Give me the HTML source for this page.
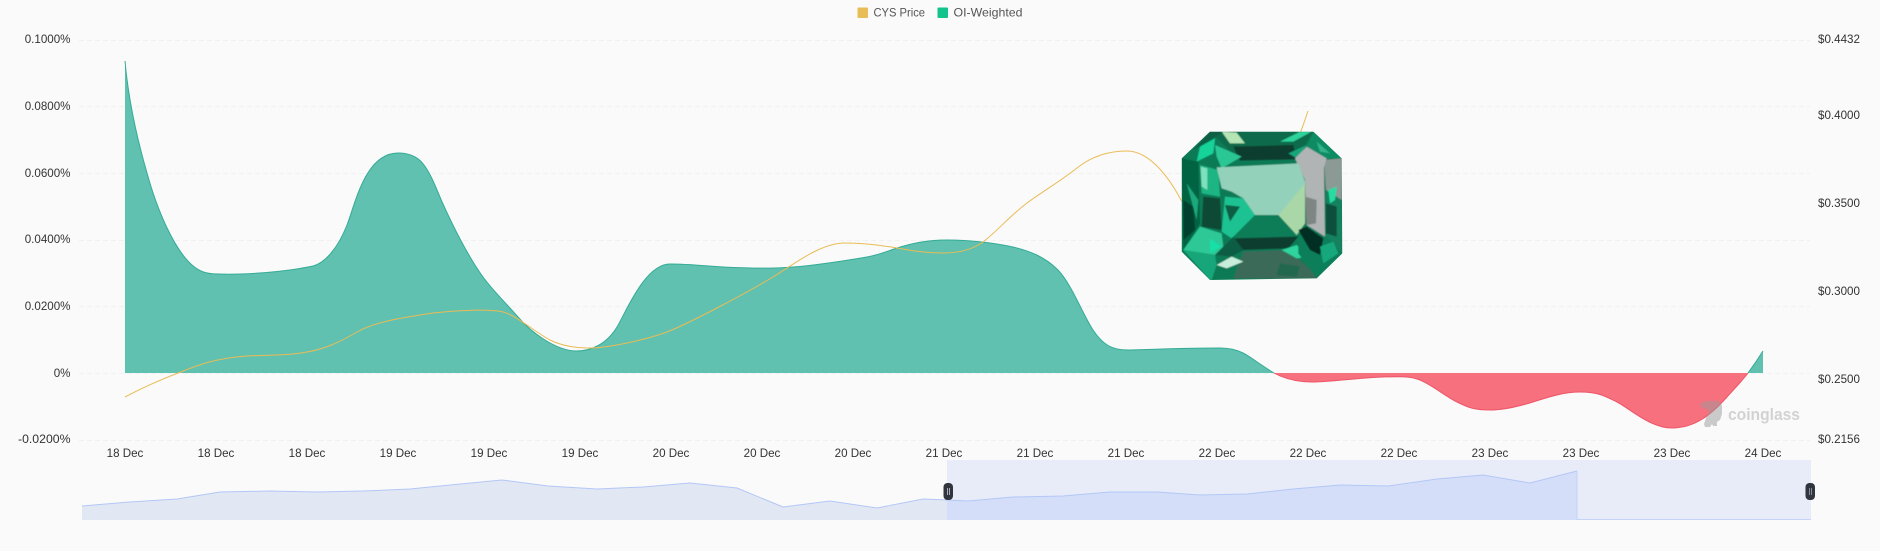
<!DOCTYPE html>
<html>
<head>
<meta charset="utf-8">
<style>
html,body{margin:0;padding:0;background:#fafafa;width:1880px;height:551px;overflow:hidden}
svg{display:block}
text{font-family:"Liberation Sans",sans-serif;font-size:11.6px;fill:#333}
</style>
</head>
<body>
<svg width="1880" height="551" viewBox="0 0 1880 551" xmlns="http://www.w3.org/2000/svg">
<defs>
<filter id="soft" x="-5%" y="-5%" width="110%" height="110%"><feGaussianBlur stdDeviation="1.6"/></filter>
<clipPath id="oct"><polygon points="180,125 490,125 575,205 577,490 500,565 180,570 95,485 95,205"/></clipPath>
</defs>
<rect width="1880" height="551" fill="#fafafa"/>

<!-- legend -->
<rect x="857.5" y="7.5" width="10.5" height="10.5" rx="1" fill="#e8bc57"/>
<text x="873.5" y="16.5" textLength="51.5" lengthAdjust="spacingAndGlyphs" style="fill:#555;font-size:11.6px">CYS Price</text>
<rect x="937.5" y="7.5" width="10.5" height="10.5" rx="1" fill="#12c48c"/>
<text x="953.5" y="16.5" textLength="69" lengthAdjust="spacingAndGlyphs" style="fill:#555;font-size:11.6px">OI-Weighted</text>

<!-- grid -->
<g stroke="#f1f1f1" stroke-width="1" stroke-dasharray="5 3">
<line x1="79" x2="1810" y1="40.5" y2="40.5"/>
<line x1="79" x2="1810" y1="106.5" y2="106.5"/>
<line x1="79" x2="1810" y1="173.5" y2="173.5"/>
<line x1="79" x2="1810" y1="240.5" y2="240.5"/>
<line x1="79" x2="1810" y1="306.5" y2="306.5"/>
<line x1="79" x2="1810" y1="373.5" y2="373.5"/>
<line x1="79" x2="1810" y1="440.5" y2="440.5"/>
</g>

<!-- left axis -->
<g text-anchor="end">
<text x="70.5" y="43">0.1000%</text>
<text x="70.5" y="110">0.0800%</text>
<text x="70.5" y="177">0.0600%</text>
<text x="70.5" y="243">0.0400%</text>
<text x="70.5" y="310">0.0200%</text>
<text x="70.5" y="377">0%</text>
<text x="70.5" y="443" textLength="52.500" lengthAdjust="spacingAndGlyphs">-0.0200%</text>
</g>

<!-- right axis -->
<g>
<text x="1818" y="43">$0.4432</text>
<text x="1818" y="119">$0.4000</text>
<text x="1818" y="207">$0.3500</text>
<text x="1818" y="295">$0.3000</text>
<text x="1818" y="383">$0.2500</text>
<text x="1818" y="443">$0.2156</text>
</g>

<!-- x axis -->
<g text-anchor="middle">
<text x="125" y="457">18 Dec</text>
<text x="216" y="457">18 Dec</text>
<text x="307" y="457">18 Dec</text>
<text x="398" y="457">19 Dec</text>
<text x="489" y="457">19 Dec</text>
<text x="580" y="457">19 Dec</text>
<text x="671" y="457">20 Dec</text>
<text x="762" y="457">20 Dec</text>
<text x="853" y="457">20 Dec</text>
<text x="944" y="457">21 Dec</text>
<text x="1035" y="457">21 Dec</text>
<text x="1126" y="457">21 Dec</text>
<text x="1217" y="457">22 Dec</text>
<text x="1308" y="457">22 Dec</text>
<text x="1399" y="457">22 Dec</text>
<text x="1490" y="457">23 Dec</text>
<text x="1581" y="457">23 Dec</text>
<text x="1672" y="457">23 Dec</text>
<text x="1763" y="457">24 Dec</text>
</g>

<!-- green area -->
<path fill="#60c1b0" d="M125 61 C128 95 136 135 147 173 C158 213 175 250 192 265 C199 271 205 274 218 274 C245 275 285 272 313 266 C325 263 338 248 347 225 C355 205 365 153 398 153 C418 153 426 163 437 190 C446 212 465 252 483 277 C494 292 507 304 518 317 C530 331 555 351 577 351 C590 351 606 345 617 327 C626 312 645 264 670 264 C690 264 705 266 723 267 C745 268 770 269 793 267 C820 265 855 259 867 257 C878 255 885 252 897 248 C910 244 925 240 947 240 C970 240 995 243 1013 247 C1030 251 1045 257 1058 270 C1072 285 1082 313 1093 330 C1103 345 1112 350 1128 350 C1146 350 1170 348 1220 348 C1230 348 1237 350 1243 353 C1251 357 1259 364 1274 373 L125 373 Z"/>
<path fill="none" stroke="#34ab95" stroke-width="1" d="M125 61 C128 95 136 135 147 173 C158 213 175 250 192 265 C199 271 205 274 218 274 C245 275 285 272 313 266 C325 263 338 248 347 225 C355 205 365 153 398 153 C418 153 426 163 437 190 C446 212 465 252 483 277 C494 292 507 304 518 317 C530 331 555 351 577 351 C590 351 606 345 617 327 C626 312 645 264 670 264 C690 264 705 266 723 267 C745 268 770 269 793 267 C820 265 855 259 867 257 C878 255 885 252 897 248 C910 244 925 240 947 240 C970 240 995 243 1013 247 C1030 251 1045 257 1058 270 C1072 285 1082 313 1093 330 C1103 345 1112 350 1128 350 C1146 350 1170 348 1220 348 C1230 348 1237 350 1243 353 C1251 357 1259 364 1274 373"/>

<!-- red area -->
<path fill="#f6707d" d="M1274 373 C1283 378 1295 382 1313 382 C1330 382 1355 378 1383 377 C1400 376.500 1410 376 1420 380 C1432 385 1445 396 1457 402 C1469 408 1475 410 1490 410 C1505 410 1520 406 1533 402 C1546 398 1562 392 1580 392 C1598 392 1605 396 1617 402 C1629 408 1650 428 1672 428 C1694 428 1710 416 1727 397 C1736 387 1742 381 1748 373 Z"/>
<path fill="none" stroke="#ee5568" stroke-width="1" d="M1274 373 C1283 378 1295 382 1313 382 C1330 382 1355 378 1383 377 C1400 376.500 1410 376 1420 380 C1432 385 1445 396 1457 402 C1469 408 1475 410 1490 410 C1505 410 1520 406 1533 402 C1546 398 1562 392 1580 392 C1598 392 1605 396 1617 402 C1629 408 1650 428 1672 428 C1694 428 1710 416 1727 397 C1736 387 1742 381 1748 373"/>

<!-- green tail -->
<path fill="#60c1b0" d="M1748 373 Q1756 362 1763 351 L1763 373 Z"/>
<path fill="none" stroke="#34ab95" d="M1748 373 Q1756 362 1763 351"/>

<!-- price line -->
<path fill="none" stroke="#eabb55" stroke-width="1" d="M125 397 C140 389 160 380 178 373 C196 366 215 358 247 356 C265 355 285 356 307 352 C325 349 340 342 357 332 C374 322 400 318 433 313 C460 310 490 309 503 312 C516 315 535 332 550 340 C560 345 572 348 590 348 C608 348 645 340 667 332 C690 323 750 291 773 277 C793 265 820 243 845 243 C862 243 880 245 897 248 C914 251 925 253 943 253 C958 253 972 250 983 242 C994 234 1012 214 1027 203 C1042 192 1062 180 1077 168 C1092 156 1108 151 1127 151 C1146 151 1165 170 1181 200 L1220 240 L1290 160 Q1300 135 1308 111"/>

<!-- watermark -->
<path fill="#9a9a9a" fill-opacity=".5" d="M1700 404 L1703 402 L1706 401 L1718 401 L1722 405 L1722 414 L1720 420 L1717 422 L1717 426 L1713 426 L1712 424 L1710 427 L1705 427 L1704 424 L1706 418 L1709 413 L1707 409 L1702 408 Z"/>
<text x="1728" y="420" textLength="72" lengthAdjust="spacingAndGlyphs" style="font-size:16.500px;font-weight:bold;fill:#d2d2d2">coinglass</text>

<!-- gem -->
<g transform="translate(1150 90) scale(.33333)" clip-path="url(#oct)">
<g filter="url(#soft)">
<rect x="80" y="110" width="510" height="470" fill="#0b7a56"/>
<polygon fill="#0a6a4b" points="180,125 490,125 440,205 270,210"/>
<polygon fill="#0a3d2d" points="250,170 430,165 440,208 270,212"/>
<polygon fill="#b5e5b5" points="215,125 260,128 285,160 240,160"/>
<polygon fill="#2ed29b" points="390,155 450,125 485,125 430,155"/>
<polygon fill="#12a67a" points="415,190 470,165 440,205"/>
<polygon fill="#0d5f45" points="180,125 220,125 190,145 130,180"/>
<polygon fill="#14d39a" points="150,170 195,145 190,190 140,215"/>
<polygon fill="#2cc795" points="195,165 275,200 215,235 200,200"/>
<polygon fill="#066443" points="95,205 145,215 150,400 100,480"/>
<polygon fill="#063f2f" points="100,330 130,350 135,420 100,450"/>
<polygon fill="#1fb583" points="150,225 205,240 210,320 155,310"/>
<polygon fill="#7fe0bd" points="152,230 172,235 172,300 155,290"/>
<polygon fill="#0a4a36" points="160,320 210,325 215,420 155,410"/>
<polygon fill="#1aa87c" points="110,280 145,330 140,390"/>
<polygon fill="#0f8c64" points="490,125 575,205 530,205 470,170"/>
<polygon fill="#35b38a" points="500,155 540,190 510,185"/>
<polygon fill="#8c9a96" points="522,210 575,205 575,330 528,300"/>
<polygon fill="#13815e" points="528,300 575,330 577,490 528,440"/>
<polygon fill="#0c4f3c" points="528,340 560,350 560,440 528,430"/>
<polygon fill="#25dca2" points="535,300 560,290 555,330 540,340"/>
<polygon fill="#b0b4b4" points="435,205 470,170 530,205 522,232 525,440 470,405 465,270"/>
<polygon fill="#7d8683" points="465,320 500,330 498,400 470,405"/>
<polygon fill="#93d1bb" points="200,232 445,220 465,275 465,320 440,435 385,375 315,375 280,325 245,305 215,295"/>
<polygon fill="#a9d7a8" points="465,280 465,400 440,435 385,375"/>
<polygon fill="#1ec292" points="225,320 280,325 315,375 245,445 215,425"/>
<polygon fill="#0a5d43" points="225,345 270,350 240,395"/>
<polygon fill="#0c7d58" points="315,375 385,375 440,435 250,445"/>
<polygon fill="#093c2d" points="250,445 445,440 415,475 280,480"/>
<polygon fill="#2dc896" points="100,480 150,410 215,430 220,470 195,495"/>
<polygon fill="#12dfa8" points="180,445 215,470 180,490"/>
<polygon fill="#0b5d44" points="195,495 250,440 280,480 245,500"/>
<polygon fill="#15a679" points="100,480 195,495 200,525 185,570 180,570"/>
<polygon fill="#3b6a58" points="280,485 415,480 495,550 500,565 250,565"/>
<polygon fill="#22674f" points="390,520 450,530 440,560 380,555"/>
<polygon fill="#2ed39d" points="395,480 440,465 480,500 440,505"/>
<polygon fill="#c7eedb" points="200,525 245,500 280,515 230,535"/>
<polygon fill="#087e5a" points="445,440 530,440 577,490 500,565 445,490"/>
<polygon fill="#052e23" points="445,420 470,410 520,445 510,495 480,480"/>
<polygon fill="#14a87b" points="510,470 550,455 565,490 520,520"/>
</g>
</g>

<!-- slider -->
<path fill="#e2e7f4" d="M82 506 L130 502 L177 499 L220 492 L270 491 L317 492 L363 491 L410 489 L450 485 L502 480 L548 486 L597 489 L643 487 L690 483 L737 488 L783 507 L830 501 L877 508 L923 499 L947 500 L947 520 L82 520 Z"/>
<rect x="947" y="460" width="864" height="60" fill="#e8ecf9"/>
<path fill="#d4def8" d="M947 500 L968 501 L1013 497 L1063 496 L1110 492 L1157 492 L1200 495 L1247 494 L1293 489 L1340 485 L1388 486 L1437 479 L1483 475 L1530 483 L1577 471 L1577 520 L947 520 Z"/>
<path fill="none" stroke="#b3c7f6" stroke-width="1" d="M82 506 L130 502 L177 499 L220 492 L270 491 L317 492 L363 491 L410 489 L450 485 L502 480 L548 486 L597 489 L643 487 L690 483 L737 488 L783 507 L830 501 L877 508 L923 499 L947 500 L968 501 L1013 497 L1063 496 L1110 492 L1157 492 L1200 495 L1247 494 L1293 489 L1340 485 L1388 486 L1437 479 L1483 475 L1530 483 L1577 471"/>
<path fill="none" stroke="#c5d3f8" stroke-width="1" d="M1577 471 L1577 519.500 L1811 519.500"/>

<!-- handles -->
<rect x="943.500" y="483" width="9.500" height="17" rx="4" fill="#31353d"/>
<rect x="947" y="488" width="1" height="7" fill="#aab"/>
<rect x="949" y="488" width="1" height="7" fill="#aab"/>
<rect x="1805.500" y="483" width="9.500" height="17" rx="4" fill="#31353d"/>
<rect x="1809" y="488" width="1" height="7" fill="#889"/>
<rect x="1811" y="488" width="1" height="7" fill="#889"/>
</svg>
</body>
</html>
